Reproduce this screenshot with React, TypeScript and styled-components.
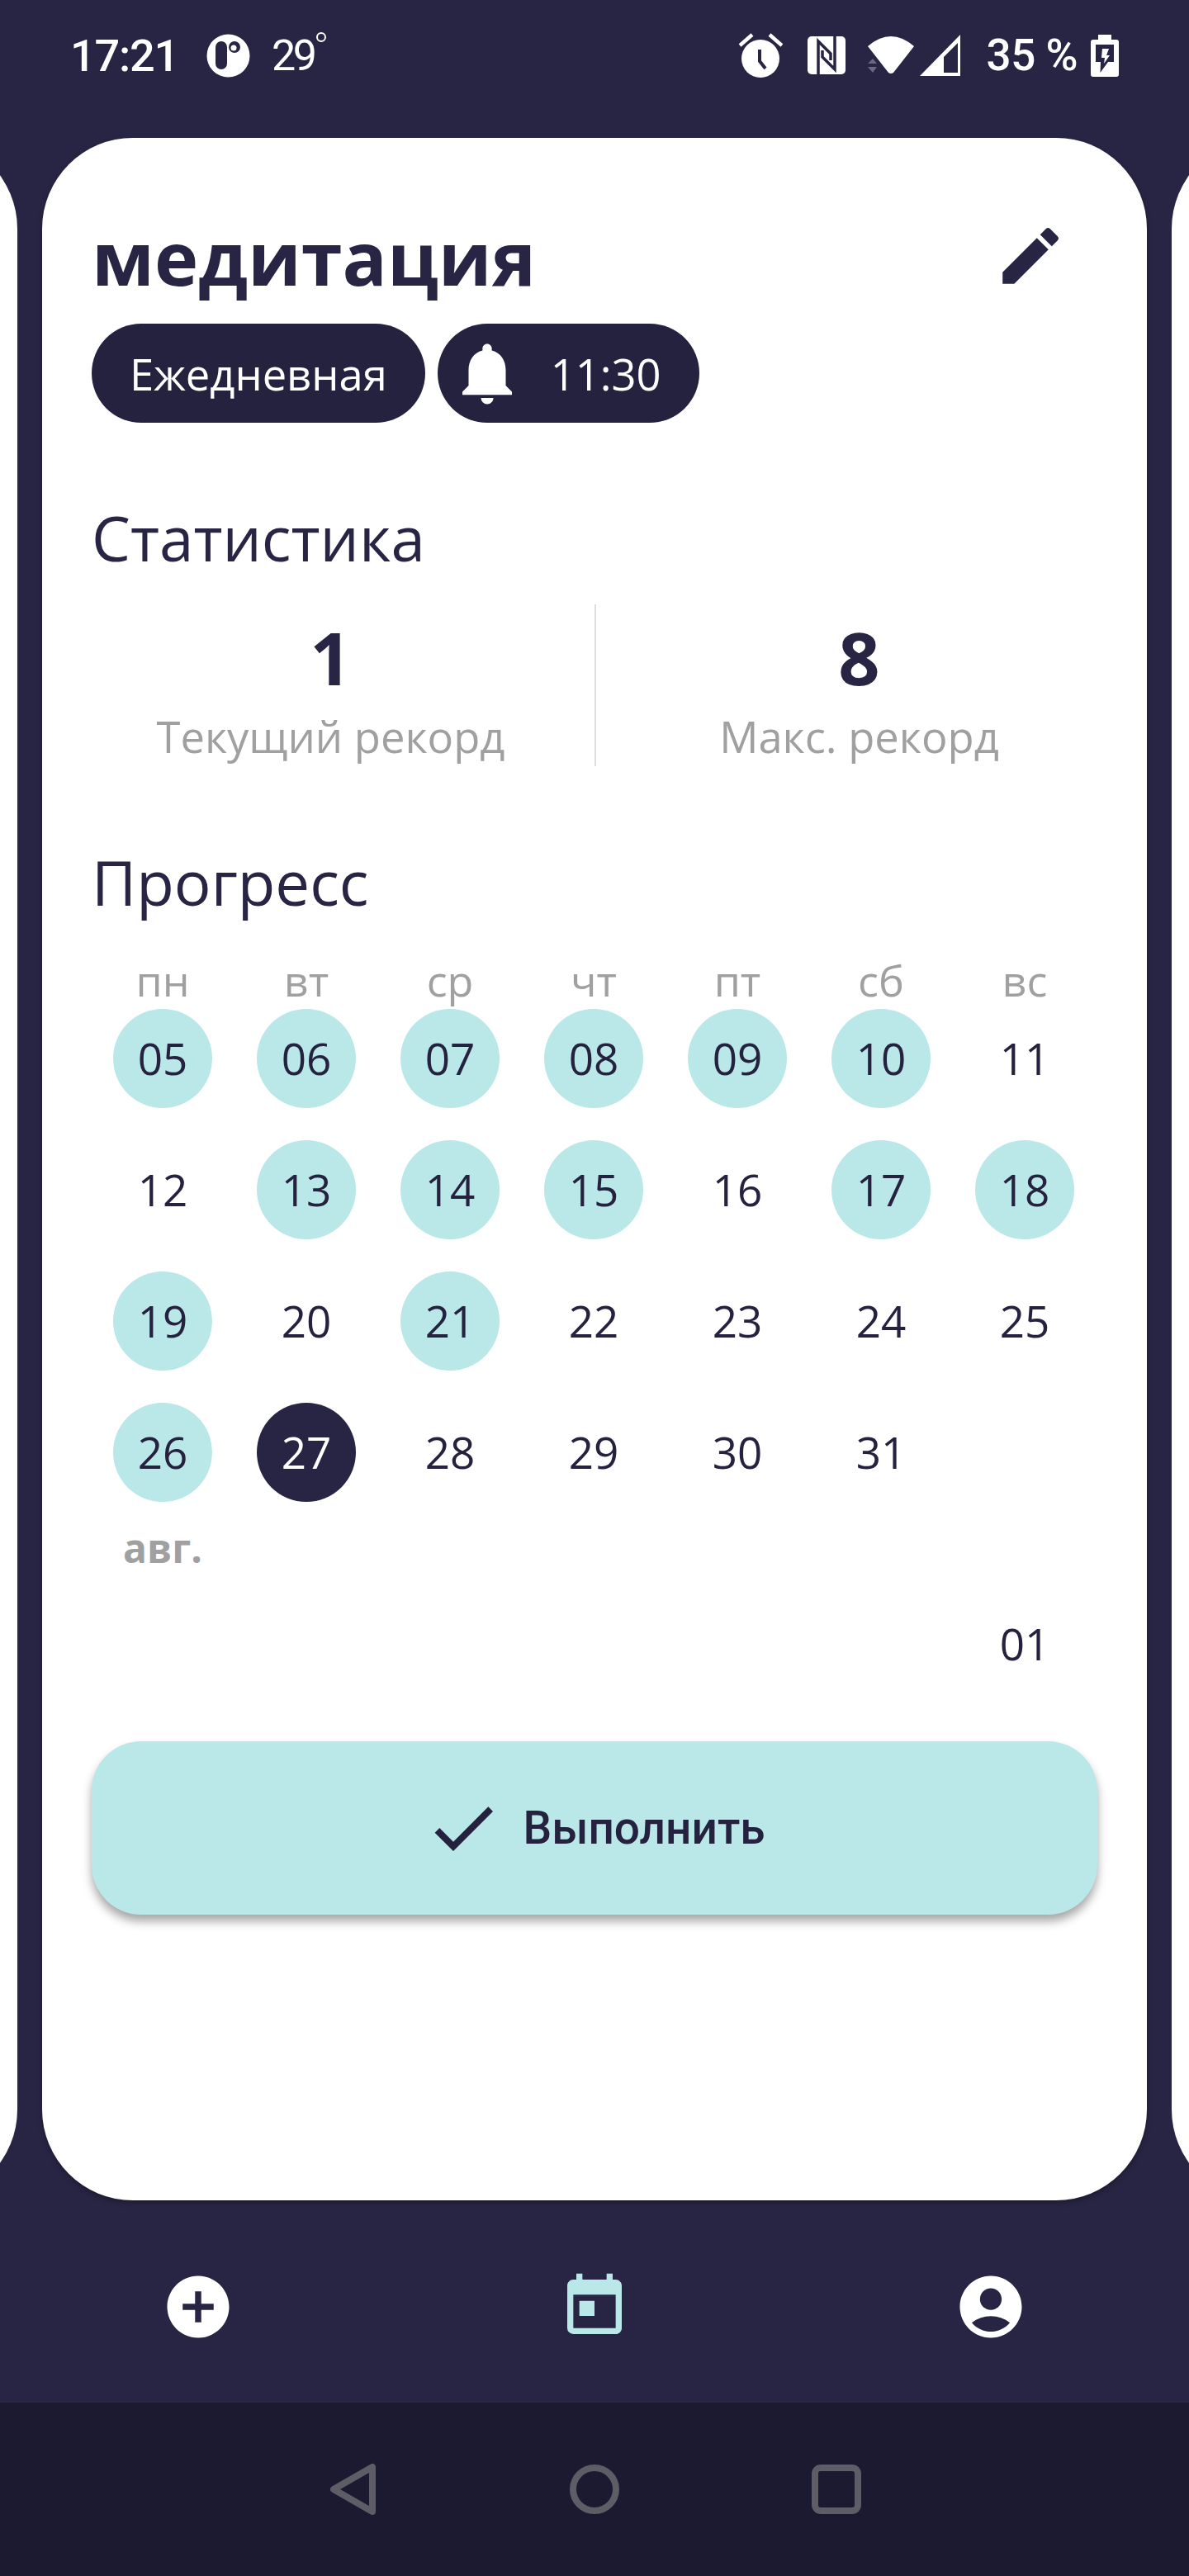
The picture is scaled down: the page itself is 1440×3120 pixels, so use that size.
import { createGlobalStyle } from "styled-components";
import styled from "styled-components";
import {
  MdAccountCircle,
  MdAddCircle,
  MdCheck,
  MdEdit,
  MdNotifications,
  MdToday,
} from "react-icons/md";

const navy = "#282544";
const ink = "#252240";
const mint = "#bae7e7";
const grey = "#a0a0a0";

const weekdays = ["пн", "вт", "ср", "чт", "пт", "сб", "вс"];
const done = ["05", "06", "07", "08", "09", "10", "13", "14", "15", "17", "18", "19", "21", "26"];
const july = [
  "05", "06", "07", "08", "09", "10", "11",
  "12", "13", "14", "15", "16", "17", "18",
  "19", "20", "21", "22", "23", "24", "25",
  "26", "27", "28", "29", "30", "31",
];

function App() {
  return (
    <Screen>
      <GlobalStyle />
      <StatusBar>
        <StatusGroup>
          <Clock>17:21</Clock>
          <StatusSvg $left={34} width="53" height="53" viewBox="0 0 53 53">
            <circle cx="26.5" cy="26.5" r="26" fill="#fff" />
            <rect x="11" y="9" width="14" height="34" rx="7" fill={navy} />
            <circle cx="34" cy="16" r="7" fill={navy} />
            <circle cx="33" cy="17" r="3.5" fill="#fff" />
          </StatusSvg>
          <Weather>29</Weather>
          <Degree />
        </StatusGroup>
        <StatusGroup>
          <StatusSvg width="53" height="54" viewBox="0 0 53 54">
            <circle cx="26" cy="31" r="23" fill="#fff" />
            <path d="M1 15 16 2M52 15 37 2" stroke="#fff" strokeWidth="4.5" fill="none" />
            <path d="M25 20v14l7 9" stroke={navy} strokeWidth="4" fill="none" />
          </StatusSvg>
          <StatusSvg $left={30} width="46" height="46" viewBox="0 0 46 46">
            <rect width="46" height="46" rx="5" fill="#fff" />
            <path d="M13 46V6l15 15v8M33 0v40L18 25v-8" stroke={navy} strokeWidth="3.5" fill="none" />
          </StatusSvg>
          <StatusSvg $left={27} width="56" height="46" viewBox="0 0 56 46">
            <path d="M0 12Q28-12 56 12L31 44q-3 2-6 0Z" fill="#fff" />
            <path d="M6 27l5 6H0ZM6 44 0 37h11Z" fill="#6b6980" />
          </StatusSvg>
          <StatusSvg $left={7} width="49" height="50" viewBox="0 0 49 50">
            <path d="M0 50 49 0v50Z" fill="#fff" />
            <path d="M29 27 46 10v36H29Z" fill={navy} />
          </StatusSvg>
          <BatteryText>35 %</BatteryText>
          <StatusSvg $left={16} width="34" height="51" viewBox="0 0 34 51">
            <path d="M9 0h16v6h6q3 0 3 3v39q0 3-3 3H3q-3 0-3-3V9q0-3 3-3h6Z" fill="#fff" />
            <path d="M6 12h22v21H6Z" fill={navy} />
            <path d="M12 33h9l-9.5 13Z" fill={navy} />
            <path d="M14 17h8l-3 8h4l-7 10 1-7h-4Z" fill="#fff" />
          </StatusSvg>
        </StatusGroup>
      </StatusBar>

      <Carousel>
        <SideCard />
        <Card>
          <TitleRow>
            <Title>медитация</Title>
            <EditIcon size={90} />
          </TitleRow>
          <Chips>
            <Chip>Ежедневная</Chip>
            <ReminderChip>
              <MdNotifications size={90} />
              <span>11:30</span>
            </ReminderChip>
          </Chips>

          <SectionTitle $top={89}>Статистика</SectionTitle>
          <Stats>
            <Stat>
              <StatValue>1</StatValue>
              <StatLabel>Текущий рекорд</StatLabel>
            </Stat>
            <Stat>
              <StatValue>8</StatValue>
              <StatLabel>Макс. рекорд</StatLabel>
            </Stat>
          </Stats>

          <SectionTitle $top={90}>Прогресс</SectionTitle>
          <Weekdays>
            {weekdays.map((day) => (
              <Weekday key={day}>{day}</Weekday>
            ))}
          </Weekdays>
          <Days>
            {july.map((day) => (
              <Day key={day}>
                <DayCircle $done={done.includes(day)} $today={day === "27"}>
                  {day}
                </DayCircle>
              </Day>
            ))}
          </Days>
          <MonthLabel>
            <span>авг.</span>
          </MonthLabel>
          <Days>
            <Day $column={7}>
              <DayCircle>01</DayCircle>
            </Day>
          </Days>

          <DoneButton>
            <MdCheck size={96} />
            <span>Выполнить</span>
          </DoneButton>
        </Card>
        <SideCard />
      </Carousel>

      <BottomNav>
        <NavItem>
          <MdAddCircle size={90} color="#fff" />
        </NavItem>
        <NavItem>
          <MdToday size={88} color={mint} />
        </NavItem>
        <NavItem>
          <MdAccountCircle size={90} color="#fff" />
        </NavItem>
      </BottomNav>

      <SystemNav>
        <svg width="60" height="64" viewBox="0 0 60 64">
          <path d="M54 5v54L7 32Z" fill="none" stroke="#5e5d66" strokeWidth="8" strokeLinejoin="round" />
        </svg>
        <svg width="60" height="64" viewBox="0 0 60 64">
          <circle cx="30" cy="32" r="26" fill="none" stroke="#5e5d66" strokeWidth="8" />
        </svg>
        <svg width="60" height="64" viewBox="0 0 60 64">
          <rect x="4" y="6" width="52" height="52" rx="7" fill="none" stroke="#5e5d66" strokeWidth="8" />
        </svg>
      </SystemNav>
    </Screen>
  );
}

export default App;

const GlobalStyle = createGlobalStyle`
  html, body {
    margin: 0;
    padding: 0;
    background: ${navy};
  }
  * {
    box-sizing: border-box;
  }
`;

const Screen = styled.div`
  width: 1440px;
  height: 3120px;
  display: flex;
  flex-direction: column;
  overflow: hidden;
  background: ${navy};
  color: ${navy};
  font-family: "Open Sans", "Noto Sans", sans-serif;
`;

const StatusBar = styled.div`
  height: 167px;
  padding: 0 85px 33px 85px;
  display: flex;
  align-items: center;
  justify-content: space-between;
  color: #fff;
  font-family: Roboto, sans-serif;
`;
const StatusGroup = styled.div`
  display: flex;
  align-items: center;
`;
const StatusSvg = styled.svg<{ $left?: number }>`
  display: block;
  flex: none;
  margin-left: ${(p) => p.$left ?? 0}px;
`;
const Clock = styled.span`
  font-size: 54px;
  font-weight: 500;
  letter-spacing: -1.2px;
`;
const Weather = styled.span`
  margin-left: 26px;
  font-size: 52px;
  font-weight: 400;
  letter-spacing: -3.5px;
`;
const Degree = styled.span`
  width: 12px;
  height: 12px;
  margin: -44px 0 0 3px;
  border: 2px solid #fff;
  border-radius: 50%;
`;
const BatteryText = styled.span`
  margin-left: 32px;
  font-size: 53px;
  font-weight: 500;
  letter-spacing: -0.5px;
`;

const Carousel = styled.div`
  height: 2498px;
  display: flex;
  justify-content: center;
  gap: 30px;
`;
const SideCard = styled.div`
  flex: none;
  width: 1338px;
  background: #fff;
  border-radius: 110px;
`;
const Card = styled(SideCard)`
  padding: 88px 60px 0;
  box-shadow: 0 3px 6px rgba(0, 0, 0, 0.3);
`;

const TitleRow = styled.div`
  display: flex;
  align-items: center;
  justify-content: space-between;
  height: 120px;
`;
const Title = styled.h1`
  margin: -8px 0 0 0;
  font-size: 90px;
  font-weight: 700;
  line-height: 120px;
`;
const EditIcon = styled(MdEdit)`
  margin: -10px 36px 0 0;
`;

const Chips = styled.div`
  display: flex;
  gap: 15px;
  margin-top: 17px;
`;
const Chip = styled.div`
  height: 120px;
  padding: 0 46px;
  display: flex;
  align-items: center;
  border-radius: 60px;
  background: ${ink};
  color: #fff;
  font-size: 52.5px;
`;
const ReminderChip = styled(Chip)`
  padding: 0 46px 0 15px;
  gap: 32px;
`;

const SectionTitle = styled.h2<{ $top: number }>`
  margin: ${(p) => p.$top}px 0 0 0;
  font-size: 74.5px;
  font-weight: 400;
  line-height: 100px;
`;

const Stats = styled.div`
  display: grid;
  grid-template-columns: 1fr 1fr;
  margin: 31px -30px 0;
  height: 196px;
`;
const Stat = styled.div`
  display: flex;
  flex-direction: column;
  align-items: center;
  & + & {
    border-left: 2px solid #dcdcdc;
  }
`;
const StatValue = styled.div`
  font-size: 88px;
  font-weight: 700;
  line-height: 120px;
  margin-top: 4px;
`;
const StatLabel = styled.div`
  margin-top: 2px;
  font-size: 52.5px;
  line-height: 68px;
  color: ${grey};
`;

const Weekdays = styled.div`
  display: grid;
  grid-template-columns: repeat(7, 174px);
  height: 51px;
  margin: 33px 0 0 -1px;
`;
const Weekday = styled.div`
  font-size: 52px;
  line-height: 71px;
  text-align: center;
  color: ${grey};
`;
const Days = styled.div`
  display: grid;
  grid-template-columns: repeat(7, 174px);
  grid-auto-rows: 159px;
  margin-left: -1px;
`;
const Day = styled.div<{ $column?: number }>`
  display: flex;
  align-items: center;
  justify-content: center;
  grid-column-start: ${(p) => p.$column ?? "auto"};
`;
const DayCircle = styled.div<{ $done?: boolean; $today?: boolean }>`
  width: 120px;
  height: 120px;
  display: flex;
  align-items: center;
  justify-content: center;
  border-radius: 50%;
  font-size: 53px;
  background: ${(p) => (p.$today ? navy : p.$done ? mint : "transparent")};
  color: ${(p) => (p.$today ? "#fff" : ink)};
`;
const MonthLabel = styled.div`
  display: grid;
  grid-template-columns: 174px;
  height: 73px;
  margin-left: -1px;
  font-size: 48px;
  font-weight: 700;
  line-height: 74px;
  text-align: center;
  color: ${grey};
`;

const DoneButton = styled.div`
  height: 210px;
  margin-top: 39px;
  display: flex;
  align-items: center;
  justify-content: center;
  gap: 24px;
  border-radius: 60px;
  background: ${mint};
  color: ${ink};
  font-family: Roboto, sans-serif;
  font-size: 55px;
  font-weight: 500;
  box-shadow: 0 8px 12px rgba(0, 0, 0, 0.35);
`;

const BottomNav = styled.div`
  height: 245px;
  padding-top: 12px;
  display: grid;
  grid-template-columns: repeat(3, 1fr);
  align-items: center;
  justify-items: center;
`;
const NavItem = styled.div`
  display: flex;
`;
const SystemNav = styled.div`
  height: 210px;
  display: flex;
  align-items: center;
  justify-content: center;
  gap: 233px;
  background: #1b1a30;
`;
